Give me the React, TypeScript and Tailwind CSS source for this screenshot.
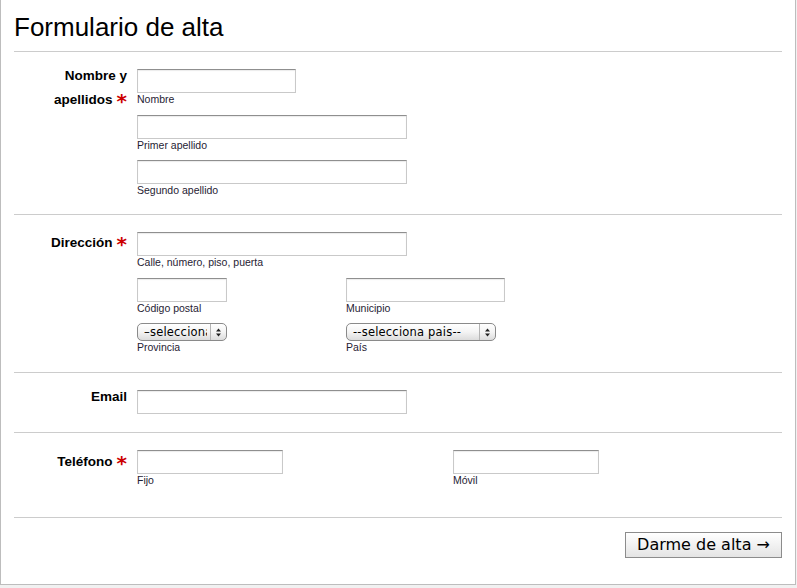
import type { ReactNode } from "react";

const sans = "font-['Liberation_Sans',Arial,sans-serif]";

function Req() {
  return (
    <span className="relative top-[4px] ml-[4px] font-['DejaVu_Sans',sans-serif] text-[20px] font-bold leading-[0px] text-[#cc0000]">
      *
    </span>
  );
}

interface FieldProps {
  width: string;
  hint?: string;
  className?: string;
}

function Field({ width, hint, className = "" }: FieldProps) {
  return (
    <div className={className}>
      <input
        type="text"
        className={`block h-[24px] ${width} border border-[#c9c9c9] border-t-[#8f8f8f] bg-white px-1 text-[13px] shadow-[inset_0_1px_1px_rgba(0,0,0,0.08)] outline-none`}
      />
      {hint && (
        <p className="h-[12px] text-[10.5px] leading-[12px] text-[#1f2233]">{hint}</p>
      )}
    </div>
  );
}

interface SelectProps {
  width: string;
  text: string;
  hint: string;
  className?: string;
}

function FakeSelect({ width, text, hint, className = "" }: SelectProps) {
  return (
    <div className={className}>
      <div className={`relative h-[18px] ${width}`}>
        <select className="block h-full w-full appearance-none rounded-[5px] border border-[#8a8a8a] bg-linear-to-b from-white via-[#f4f4f4] to-[#dcdcdc] pl-[6px] pr-[19px] font-['DejaVu_Sans',sans-serif] text-[11.5px] leading-[16px] tracking-[0.2px] text-black outline-none">
          <option>{text}</option>
        </select>
        <span className="pointer-events-none absolute top-px bottom-px right-[16px] w-px bg-[#b4b4b4]" />
        <svg
          viewBox="0 0 7 11"
          className="pointer-events-none absolute right-[5px] top-[3.5px] h-[11px] w-[7px]"
        >
          <path d="M1 4.5 L3.5 1.5 L6 4.5Z" fill="#222" />
          <path d="M1 6.5 L3.5 9.5 L6 6.5Z" fill="#222" />
        </svg>
      </div>
      <p className="h-[12px] text-[10.5px] leading-[12px] text-[#1f2233]">{hint}</p>
    </div>
  );
}

interface RowProps {
  label: ReactNode;
  labelPad: string;
  bottomPad: string;
  children: ReactNode;
}

function Row({ label, labelPad, bottomPad, children }: RowProps) {
  return (
    <div className={`flex border-b border-[#cccccc] pt-0 ${bottomPad}`}>
      <div
        className={`w-[113px] shrink-0 text-right text-[13.5px] font-bold leading-[24px] text-black ${labelPad}`}
      >
        {label}
      </div>
      <div className="ml-[10px] flex flex-col gap-[9.5px] pt-[17px]">{children}</div>
    </div>
  );
}

export default function App() {
  return (
    <div className={`h-[588px] w-full bg-[#f1f1f1] ${sans}`}>
      <div className="w-[796px] border-x border-b border-[#bdbdbd] bg-white px-[13px]">
        <h1 className="border-b border-[#cccccc] pt-[12px] pb-[9px] text-[26px] leading-[30px] font-normal text-black">
          Formulario de alta
        </h1>

        <Row
          labelPad="pt-[12px]"
          bottomPad="pb-[18px]"
          label={
            <>
              Nombre y
              <br />
              apellidos
              <Req />
            </>
          }
        >
          <Field width="w-[159px]" hint="Nombre" />
          <Field width="w-[270px]" hint="Primer apellido" />
          <Field width="w-[270px]" hint="Segundo apellido" />
        </Row>

        <Row
          labelPad="pt-[16px]"
          bottomPad="pb-[19px]"
          label={
            <>
              Dirección
              <Req />
            </>
          }
        >
          <Field width="w-[270px]" hint="Calle, número, piso, puerta" />
          <div className="flex">
            <Field width="w-[90px]" hint="Código postal" className="w-[209px]" />
            <Field width="w-[159px]" hint="Municipio" />
          </div>
          <div className="flex">
            <FakeSelect width="w-[90px]" text="–selecciona–" hint="Provincia" className="w-[209px]" />
            <FakeSelect width="w-[150px]" text="--selecciona pais--" hint="País" />
          </div>
        </Row>

        <Row labelPad="pt-[12px]" bottomPad="pb-[18px]" label="Email">
          <Field width="w-[270px]" />
        </Row>

        <Row
          labelPad="pt-[17px]"
          bottomPad="pb-[31px]"
          label={
            <>
              Teléfono
              <Req />
            </>
          }
        >
          <div className="flex">
            <Field width="w-[146px]" hint="Fijo" className="w-[316px]" />
            <Field width="w-[146px]" hint="Móvil" />
          </div>
        </Row>

        <div className="flex justify-end pt-[14px] pb-[26px]">
          <button
            type="button"
            className="h-[26px] w-[157px] border border-[#8c8c8c] bg-linear-to-b from-white to-[#e4e4e4] font-['DejaVu_Sans',sans-serif] text-[16px] leading-[24px] text-black"
          >
            Darme de alta →
          </button>
        </div>
      </div>
    </div>
  );
}
